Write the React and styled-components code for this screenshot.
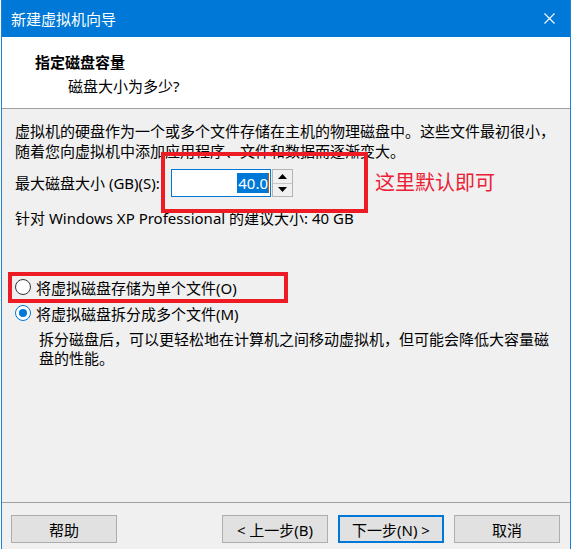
import React from "react"
import styled, { createGlobalStyle } from "styled-components"

const GlobalStyle = createGlobalStyle`
  html, body {
    margin: 0;
    padding: 0;
    background: #fff;
  }
  body {
    font-family: "Noto Sans", "Noto Sans CJK SC", sans-serif;
    color: #000;
  }
`

const App = () => (
  <>
    <GlobalStyle />
    <Window>
      <TitleBar>
        <span>新建虚拟机向导</span>
        <Close>
          <svg width="11" height="11" viewBox="0 0 11 11">
            <path d="M0.5 0.5 L10.5 10.5 M10.5 0.5 L0.5 10.5" stroke="#fff" strokeWidth="1.1" />
          </svg>
        </Close>
      </TitleBar>
      <Header>
        <H1>指定磁盘容量</H1>
        <Sub>磁盘大小为多少?</Sub>
      </Header>
      <Body>
        <Para>
          虚拟机的硬盘作为一个或多个文件存储在主机的物理磁盘中。这些文件最初很小，
          <br />
          随着您向虚拟机中添加应用程序、文件和数据而逐渐变大。
        </Para>
        <SpinRow>
          <Label>最大磁盘大小 (GB)(S):</Label>
          <Input>
            <Selected>40.0</Selected>
            <Caret />
          </Input>
          <Spinner>
            <SpinButton>
              <svg width="9" height="5" viewBox="0 0 9 5">
                <polygon points="4.5,0 9,5 0,5" fill="#000" />
              </svg>
            </SpinButton>
            <SpinButton>
              <svg width="9" height="5" viewBox="0 0 9 5">
                <polygon points="0,0 9,0 4.5,5" fill="#000" />
              </svg>
            </SpinButton>
          </Spinner>
          <Note>这里默认即可</Note>
        </SpinRow>
        <Hint>针对 Windows XP Professional 的建议大小: 40 GB</Hint>
        <Options>
          <Option>
            <Radio />
            将虚拟磁盘存储为单个文件(O)
          </Option>
          <Option>
            <Radio checked />
            将虚拟磁盘拆分成多个文件(M)
          </Option>
        </Options>
        <Desc>
          拆分磁盘后，可以更轻松地在计算机之间移动虚拟机，但可能会降低大容量磁
          <br />
          盘的性能。
        </Desc>
        <Mark $left={159} $top={43} $w={207} $h={61} />
        <Mark $left={6} $top={163} $w={280} $h={31} />
      </Body>
      <Footer>
        <Button>帮助</Button>
        <Spacer />
        <Button>&lt; 上一步(B)</Button>
        <Button $primary>下一步(N) &gt;</Button>
        <Button>取消</Button>
      </Footer>
    </Window>
  </>
)

const Window = styled.div`
  width: 570px;
  height: 549px;
  margin-left: 1px;
  box-sizing: border-box;
  border-left: 1px solid #1883d7;
  border-right: 1px solid #1883d7;
  background: #f0f0f0;
  display: flex;
  flex-direction: column;
  overflow: hidden;
`

const TitleBar = styled.div`
  height: 37px;
  flex-shrink: 0;
  background: #0078d7;
  color: #fff;
  font-size: 15px;
  display: flex;
  align-items: center;
  justify-content: space-between;
  padding-left: 9px;
  box-sizing: border-box;
`

const Close = styled.div`
  width: 42px;
  display: flex;
  justify-content: center;
  align-items: center;
`

const Header = styled.div`
  height: 72px;
  flex-shrink: 0;
  box-sizing: border-box;
  background: #fff;
  border-bottom: 1px solid #a0a0a0;
  padding: 15px 0 0 33px;
`

const H1 = styled.div`
  font-size: 15px;
  font-weight: 700;
  line-height: 20px;
`

const Sub = styled.div`
  font-size: 15px;
  line-height: 20px;
  margin: 4px 0 0 33px;
`

const Body = styled.div`
  flex: 1;
  position: relative;
  padding: 12px 13px 0;
  font-size: 15px;
`

const Para = styled.p`
  margin: 0;
  line-height: 20px;
  white-space: nowrap;
`

const SpinRow = styled.div`
  display: flex;
  align-items: center;
  margin-top: 8px;
  height: 28px;
`

const Label = styled.div`
  width: 156px;
  line-height: 20px;
`

const Input = styled.div`
  width: 100px;
  height: 28px;
  box-sizing: border-box;
  background: #fff;
  border: 1px solid #0078d7;
  display: flex;
  align-items: center;
  justify-content: flex-end;
  padding-right: 1px;
`

const Selected = styled.span`
  background: #0078d7;
  color: #fff;
  line-height: 20px;
  padding: 0 0 0 1px;
`

const Caret = styled.span`
  width: 1px;
  height: 20px;
  background: #c05a00;
`

const Spinner = styled.div`
  width: 21px;
  height: 28px;
  margin-left: 1px;
  box-sizing: border-box;
  border: 1px solid #b4b4b4;
  display: flex;
  flex-direction: column;
`

const SpinButton = styled.div`
  flex: 1;
  background: #f0f0f0;
  display: flex;
  align-items: center;
  justify-content: center;
  & + & {
    border-top: 1px solid #c8c8c8;
  }
`

const Note = styled.div`
  margin-left: 82px;
  font-size: 20px;
  line-height: 26px;
  color: #ec2035;
`

const Hint = styled.div`
  margin-top: 11px;
  line-height: 20px;
`

const Options = styled.div`
  margin-top: 46px;
`

const Option = styled.div`
  display: flex;
  align-items: center;
  height: 26px;
  gap: 5px;
`

const Radio = styled.span`
  width: 16px;
  height: 16px;
  box-sizing: border-box;
  border-radius: 50%;
  background: #fff;
  border: 1px solid ${p => (p.checked ? "#0078d7" : "#333")};
  display: flex;
  align-items: center;
  justify-content: center;
  &::after {
    content: "";
    display: ${p => (p.checked ? "block" : "none")};
    width: 8px;
    height: 8px;
    border-radius: 50%;
    background: #0078d7;
  }
`

const Desc = styled.p`
  margin: 4px 0 0 24px;
  line-height: 19px;
  white-space: nowrap;
`

const Mark = styled.div`
  position: absolute;
  left: ${p => p.$left}px;
  top: ${p => p.$top}px;
  width: ${p => p.$w}px;
  height: ${p => p.$h}px;
  box-sizing: border-box;
  border: 4px solid #ed1c24;
  pointer-events: none;
`

const Footer = styled.div`
  height: 47px;
  flex-shrink: 0;
  box-sizing: border-box;
  border-top: 1px solid #a0a0a0;
  padding: 12px 10px 0 9px;
  display: flex;
  align-items: flex-start;
  gap: 10px;
`

const Spacer = styled.div`
  flex: 1;
`

const Button = styled.div`
  width: 106px;
  height: 28px;
  box-sizing: border-box;
  background: #e1e1e1;
  border: ${p => (p.$primary ? "2px solid #0078d7" : "1px solid #adadad")};
  font-size: 15px;
  display: flex;
  align-items: center;
  justify-content: center;
`

export default App
